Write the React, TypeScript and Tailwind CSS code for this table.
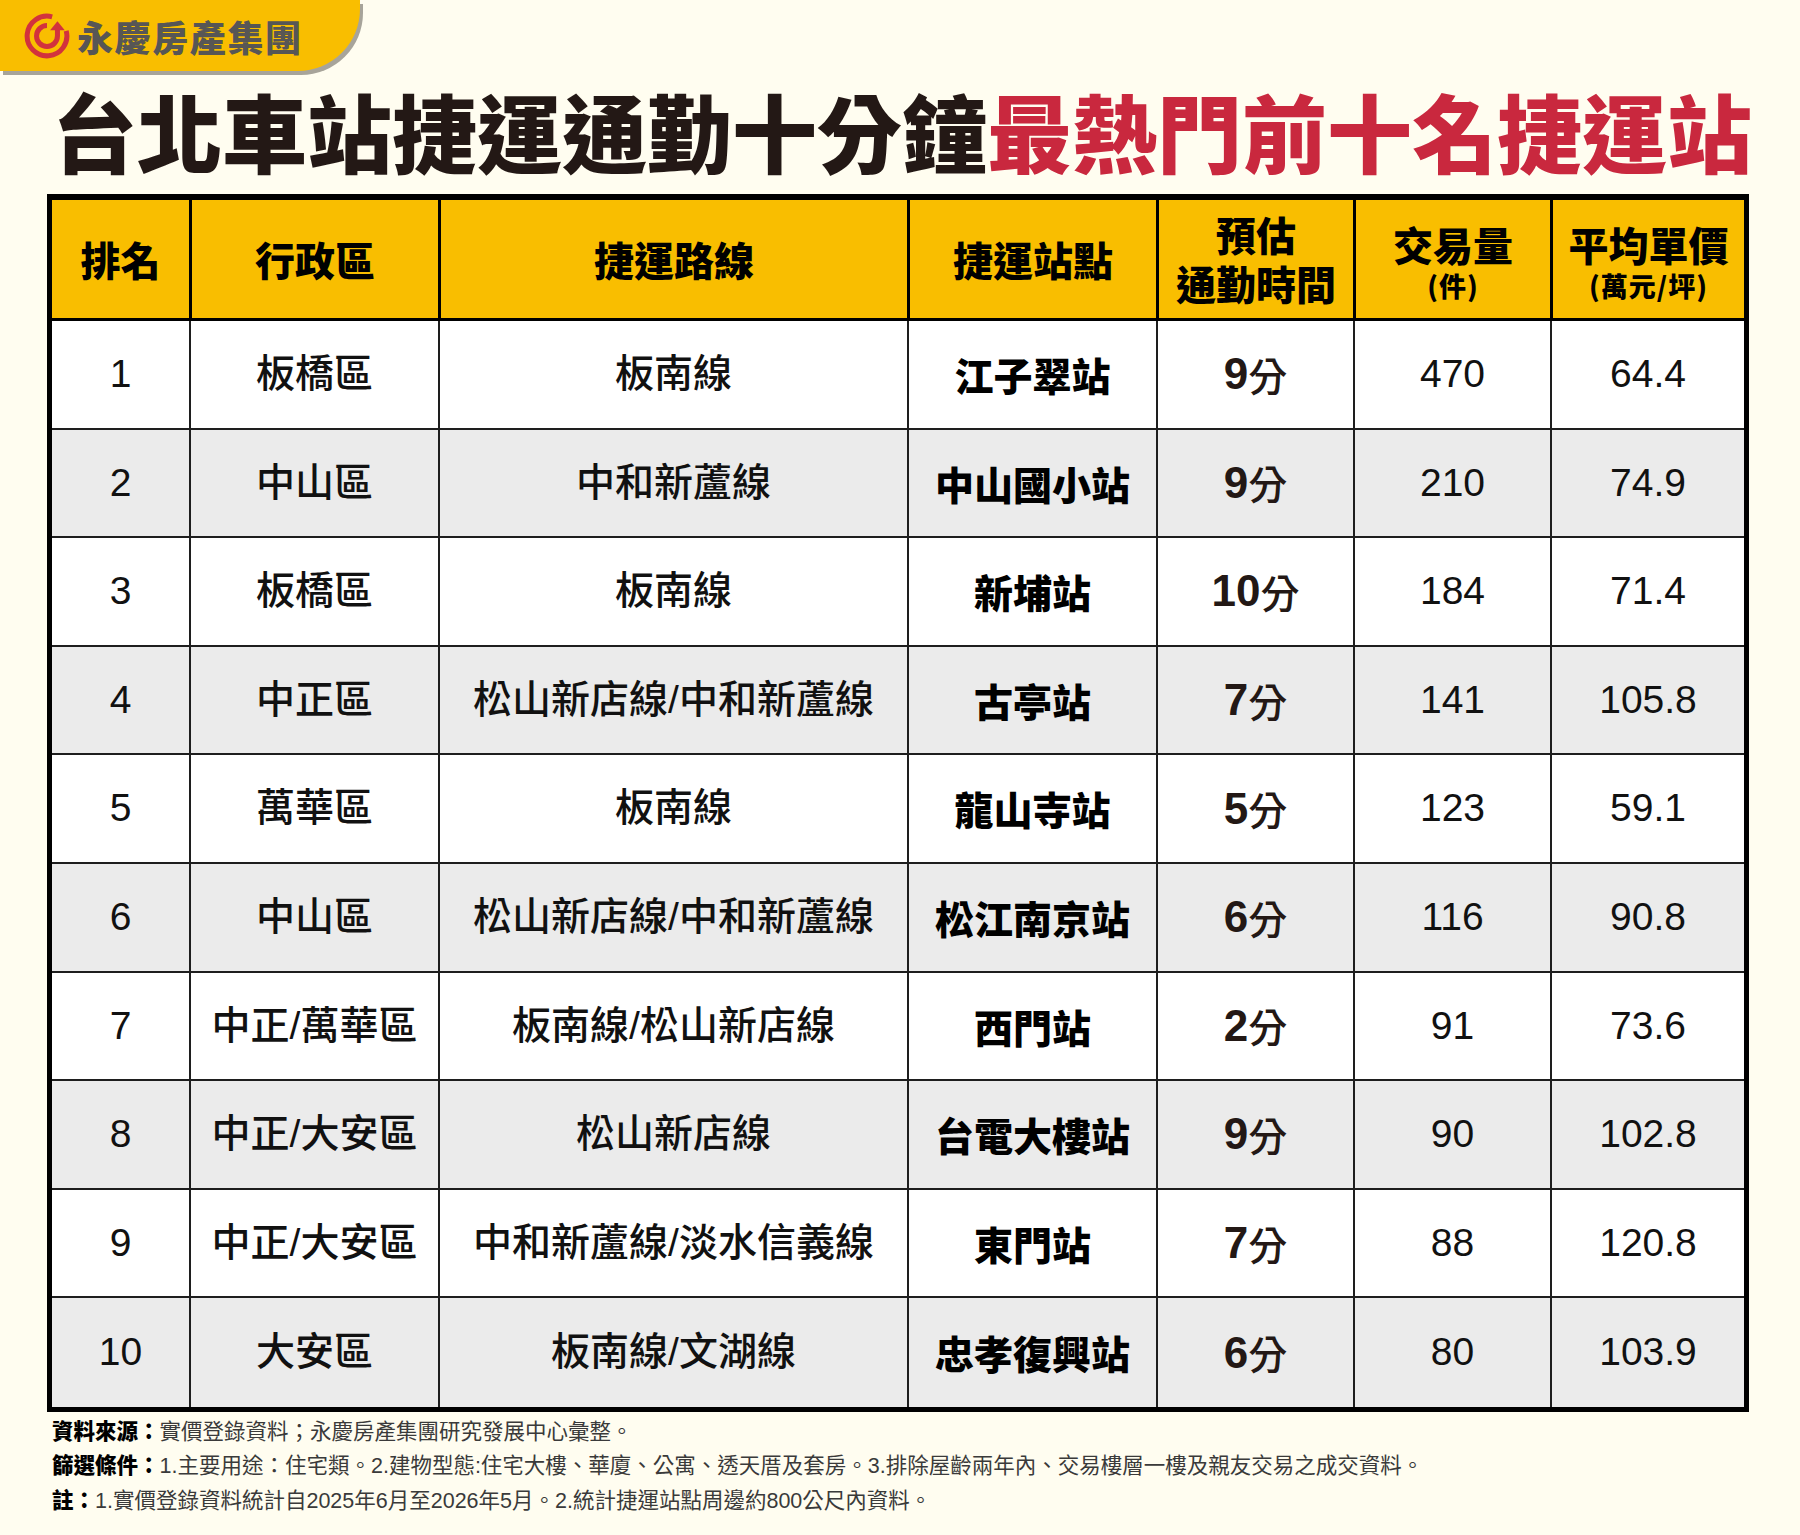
import React from "react";

const rows: [string, string, string, string, string, string, string][] = [
  ["1", "板橋區", "板南線", "江子翠站", "9", "470", "64.4"],
  ["2", "中山區", "中和新蘆線", "中山國小站", "9", "210", "74.9"],
  ["3", "板橋區", "板南線", "新埔站", "10", "184", "71.4"],
  ["4", "中正區", "松山新店線/中和新蘆線", "古亭站", "7", "141", "105.8"],
  ["5", "萬華區", "板南線", "龍山寺站", "5", "123", "59.1"],
  ["6", "中山區", "松山新店線/中和新蘆線", "松江南京站", "6", "116", "90.8"],
  ["7", "中正/萬華區", "板南線/松山新店線", "西門站", "2", "91", "73.6"],
  ["8", "中正/大安區", "松山新店線", "台電大樓站", "9", "90", "102.8"],
  ["9", "中正/大安區", "中和新蘆線/淡水信義線", "東門站", "7", "88", "120.8"],
  ["10", "大安區", "板南線/文湖線", "忠孝復興站", "6", "80", "103.9"],
];

const FONT = "font-['Liberation_Sans','Noto_Sans_CJK_TC',sans-serif]";
const CJK = "font-['Noto_Sans_CJK_TC',sans-serif]";

function Logo() {
  return (
    <svg width="46" height="46" viewBox="0 0 44 44" className="shrink-0">
      <path
        d="M40.35 17.08 A19 19 0 1 1 26.92 3.65"
        fill="none"
        stroke="#d2323d"
        strokeWidth="4.8"
      />
      <path
        d="M22 12 A10 10 0 1 0 32 22 L32 15"
        fill="none"
        stroke="#d2323d"
        strokeWidth="4.8"
      />
      <polygon points="25,16.5 32,8 39,16.5" fill="#d2323d" />
    </svg>
  );
}

const headCell =
  "flex flex-col items-center justify-center border-l-[3px] border-black text-black font-black text-[40px] leading-[49px] " +
  CJK;

const bodyCell = "flex items-center justify-center border-l-2 border-[#1e1e1e]";

export default function App() {
  return (
    <div className={`w-[1800px] h-[1535px] bg-[#fffdf0] ${FONT}`}>
      {/* Logo tab */}
      <div className="w-[360px] h-[71px] bg-[#f9be00] rounded-br-[62px] shadow-[3px_4px_0_#a7a49a] flex items-center pl-[24px] gap-[7px]">
        <Logo />
        <span className={`${CJK} font-black text-[36px] leading-none tracking-[1.6px] text-[#575655]`}>
          永慶房產集團
        </span>
      </div>

      {/* Title */}
      <h1 className={`${CJK} mt-[16px] ml-[52px] h-[85px] text-[85px] leading-[85px] font-black whitespace-nowrap text-[#231815]`}>
        台北車站捷運通勤十分鐘<span className="text-[#c9283e]">最熱門前十名捷運站</span>
      </h1>

      {/* Table */}
      <div className="mt-[22px] ml-[47px] w-[1702px] border-[5px] border-t-[6px] border-black">
        <div className="grid grid-cols-[137px_249px_469px_249px_197px_197px_194px] h-[121px] bg-[#f9be00] border-b-[3px] border-black">
          <div className={headCell + " !border-l-0"}>排名</div>
          <div className={headCell}>行政區</div>
          <div className={headCell}>捷運路線</div>
          <div className={headCell}>捷運站點</div>
          <div className={headCell}>
            <span>預估</span>
            <span>通勤時間</span>
          </div>
          <div className={headCell}>
            <span className="leading-[44px] mt-[6px]">交易量</span>
            <span className="text-[27px] leading-[34px] mt-[3px] tracking-[1px]">(件)</span>
          </div>
          <div className={headCell}>
            <span className="leading-[44px] mt-[6px]">平均單價</span>
            <span className="text-[27px] leading-[34px] mt-[3px] tracking-[1px]">(萬元/坪)</span>
          </div>
        </div>
        {rows.map((r, i) => (
          <div
            key={r[0]}
            className={`grid grid-cols-[137px_249px_469px_249px_197px_197px_194px] h-[108.6px] ${
              i % 2 === 1 ? "bg-[#ebebeb]" : "bg-white"
            } ${i < rows.length - 1 ? "border-b-2 border-[#1e1e1e]" : ""}`}
          >
            <div className="flex items-center justify-center text-[39px] text-[#111]">{r[0]}</div>
            <div className={`${bodyCell} text-[39px] font-medium text-[#111]`}>{r[1]}</div>
            <div className={`${bodyCell} text-[39px] font-medium text-[#111] whitespace-nowrap`}>{r[2]}</div>
            <div className={`${bodyCell} text-[39px] font-black text-black ${CJK}`}>{r[3]}</div>
            <div className={`${bodyCell} text-[#231815]`}>
              <span className="text-[44px] font-bold leading-none">{r[4]}</span>
              <span className={`${CJK} text-[39px] font-medium leading-none`}>分</span>
            </div>
            <div className={`${bodyCell} text-[39px] text-[#111]`}>{r[5]}</div>
            <div className={`${bodyCell} text-[39px] text-[#111]`}>{r[6]}</div>
          </div>
        ))}
      </div>

      {/* Footer */}
      <div className="mt-[3px] ml-[52px] text-[21.5px] leading-[34.5px] text-[#3a3a3a] whitespace-nowrap">
        <p>
          <b className="font-black text-black">資料來源：</b>實價登錄資料；永慶房產集團研究發展中心彙整。
        </p>
        <p>
          <b className="font-black text-black">篩選條件：</b>1.主要用途：住宅類。2.建物型態:住宅大樓、華廈、公寓、透天厝及套房。3.排除屋齡兩年內、交易樓層一樓及親友交易之成交資料。
        </p>
        <p>
          <b className="font-black text-black">註：</b>1.實價登錄資料統計自2025年6月至2026年5月。2.統計捷運站點周邊約800公尺內資料。
        </p>
      </div>
    </div>
  );
}
